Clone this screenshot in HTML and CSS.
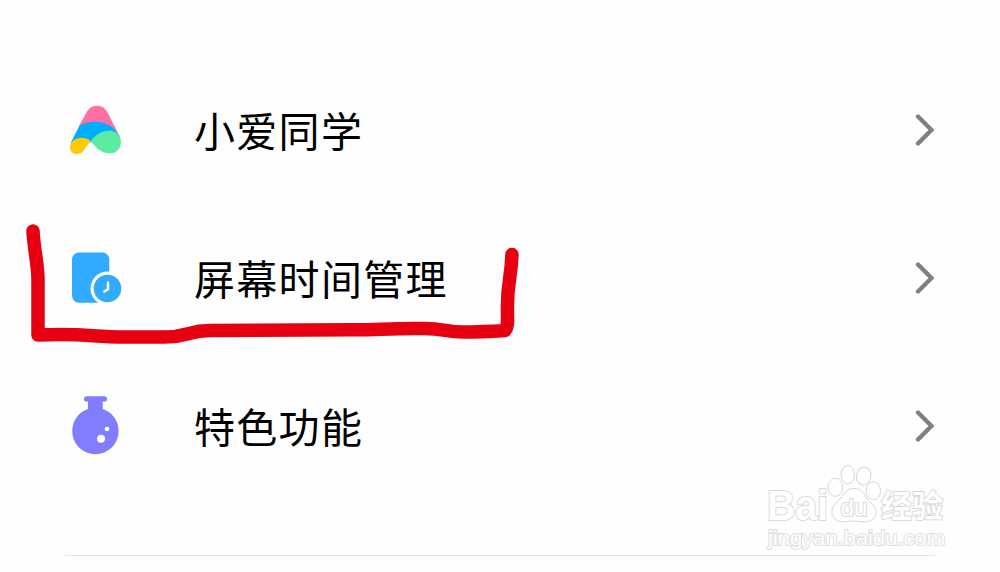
FILE: index.html
```html
<!DOCTYPE html>
<html lang="zh-CN">
<head>
<meta charset="UTF-8">
<meta name="viewport" content="width=device-width, initial-scale=1.0">
<title>设置</title>
<link rel="stylesheet" href="styles.css">
</head>
<body>

<div class="settings">
  <div class="item">
    <svg class="icon" viewBox="0 0 60 60">
      <path fill="#ff6fa5" d="M13 26 L21 11.5 Q24.500 5.700 31 5.700 Q37.500 5.700 41 11.500 L53.500 36 L32 32 Z"/>
      <path fill="#00aeff" d="M4.700 43 L13.500 25.500 Q21 21.500 31 21.700 Q46 22.500 53.500 36 L44 40 L24.700 42 L15 46 Z"/>
      <path fill="#fbcb08" d="M4.700 44 C8 37 18 35.500 24.700 41 L17.500 50.500 A8 8 0 0 1 10 54 C5 53.500 3 49 4.700 44 Z"/>
      <path fill="#5bec9f" d="M24.700 41 C29 35 35.500 30.700 43.500 30.700 C48 30.700 52 33 53.500 36 C57.500 44 53 53.300 44 53.300 C34 53.300 29 46.500 24.700 41 Z"/>
    </svg>
    <span class="name">小爱同学</span>
    <svg class="arrow" viewBox="0 0 20 32"><path d="M4 2.500 L17.500 16 L4 29.500"/></svg>
  </div>

  <div class="item">
    <svg class="icon" viewBox="0 0 60 60">
      <rect x="6" y="4.500" width="37.300" height="50.200" rx="7" fill="#31abff"/>
      <circle cx="41.500" cy="40.500" r="17" fill="#fefefe"/>
      <circle cx="41.500" cy="40.500" r="13.800" fill="#31abff"/>
      <path d="M42 34.500 V41.300 L38.300 43.600" fill="none" stroke="#fff" stroke-width="2.400" stroke-linecap="round"/>
    </svg>
    <span class="name">屏幕时间管理</span>
    <svg class="arrow" viewBox="0 0 20 32"><path d="M4 2.500 L17.500 16 L4 29.500"/></svg>
  </div>

  <div class="item">
    <svg class="icon" viewBox="0 0 60 60">
      <rect x="18" y="0.300" width="23" height="5.200" rx="2.600" fill="#807dff"/>
      <rect x="22" y="3" width="14.700" height="14" fill="#807dff"/>
      <circle cx="29.400" cy="35" r="23.200" fill="#807dff"/>
      <circle cx="35" cy="42.700" r="4" fill="#fff"/>
      <circle cx="41" cy="33" r="2.300" fill="#fff"/>
    </svg>
    <span class="name">特色功能</span>
    <svg class="arrow" viewBox="0 0 20 32"><path d="M4 2.500 L17.500 16 L4 29.500"/></svg>
  </div>
</div>
<hr class="line">

<!-- Red pen mark around the second row -->
<svg class="marker" viewBox="0 0 500 130">
  <path d="M8 11 C9 30 13 44 13 60 V115 C62 113 65 117 100 117 H140 C163 117 163 110.500 185 110.500 L330 109.800 C355 109.800 365 108 400 108.500 C418 108.500 422 112 438 112 C455 112 472 111 480 110.500 C484 106 482 98 482.500 84 C482.500 63 486 59 487 34.500"/>
</svg>

<!-- Watermark -->
<svg class="watermark" viewBox="0 0 190 95">
  <text class="logo" x="7" y="60" textLength="61" lengthAdjust="spacingAndGlyphs">Bai</text>
  <ellipse cx="75.300" cy="27.300" rx="7.300" ry="9"/>
  <ellipse cx="87.700" cy="14.700" rx="6.800" ry="9.200"/>
  <ellipse cx="103.700" cy="16" rx="7.200" ry="9" transform="rotate(12 103.700 16)"/>
  <ellipse cx="113.300" cy="30.700" rx="7.200" ry="9"/>
  <path d="M94 28.500 C104 28.500 104 37 110 42 C117 48 118 54 113 59 C108 64 101 61 94 61 C87 61 80 64 75 59 C70 54 71 47 78 41 C84 36 85 28.500 94 28.500 Z"/>
  <text class="du" x="80.500" y="56" textLength="27" lengthAdjust="spacingAndGlyphs">du</text>
  <text class="cn" x="121" y="57" textLength="62" lengthAdjust="spacingAndGlyphs">经验</text>
  <text class="url" x="8" y="85" textLength="177" lengthAdjust="spacingAndGlyphs">jingyan.baidu.com</text>
</svg>

</body>
</html>
```

FILE: styles.css
```css
body {
  margin: 0;
  height: 572px;
  overflow: hidden;
  position: relative;
  background-color: #fefefe;
  font-family: "Noto Sans CJK SC", sans-serif;
}
.settings {
  padding: 56px 66px 0 66px;
}
.item {
  display: flex;
  align-items: center;
  height: 148px;
}
.icon {
  width: 60px;
  height: 60px;
}
.name {
  flex: 1;
  margin-left: 68px;
  padding-bottom: 2px;
  font-size: 41px;
  line-height: 60px;
  letter-spacing: 1.3px;
  color: #000;
}
.arrow {
  width: 20px;
  height: 32px;
  padding-bottom: 1px;
}
.arrow path {
  fill: none;
  stroke: #808080;
  stroke-width: 4.4;
  stroke-linecap: round;
}
.line {
  margin: 55px 65px 0;
  border: 0;
  border-top: 1px solid #e2e2e2;
}
.marker {
  position: absolute;
  left: 25px;
  top: 220px;
  width: 500px;
  height: 130px;
}
.marker path {
  fill: none;
  stroke: #e60012;
  stroke-width: 13.5;
  stroke-linecap: round;
  stroke-linejoin: round;
}
.watermark {
  position: absolute;
  left: 760px;
  top: 460px;
  width: 190px;
  height: 95px;
  fill: #fff;
  stroke: #d6d6d6;
  stroke-width: 1;
}
.watermark text {
  font-family: "Liberation Sans", sans-serif;
  font-weight: bold;
  paint-order: stroke;
  stroke: #dadada;
  stroke-width: 2;
}
.watermark .logo {
  font-size: 42px;
}
.watermark .du {
  font-size: 24px;
  font-weight: normal;
}
.watermark .cn {
  font-family: "Noto Sans CJK SC", sans-serif;
  font-size: 31px;
}
.watermark .url {
  font-size: 21px;
  font-weight: normal;
  stroke: #dedede;
}
```
